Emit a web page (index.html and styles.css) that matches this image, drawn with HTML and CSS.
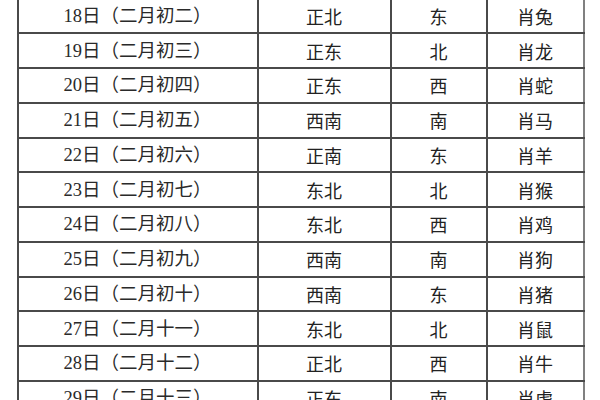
FILE: index.html
```html
<!DOCTYPE html>
<html lang="zh">
<head>
<meta charset="utf-8">
<link rel="stylesheet" href="styles.css">
</head>
<body>
<table class="tbl">
<colgroup><col class="c1"><col class="c2"><col class="c3"><col class="c4"></colgroup>
<tbody>
<tr><td class="date">18日（二月初二）</td><td>正北</td><td>东</td><td>肖兔</td></tr>
<tr><td class="date">19日（二月初三）</td><td>正东</td><td>北</td><td>肖龙</td></tr>
<tr><td class="date">20日（二月初四）</td><td>正东</td><td>西</td><td>肖蛇</td></tr>
<tr><td class="date">21日（二月初五）</td><td>西南</td><td>南</td><td>肖马</td></tr>
<tr><td class="date">22日（二月初六）</td><td>正南</td><td>东</td><td>肖羊</td></tr>
<tr><td class="date">23日（二月初七）</td><td>东北</td><td>北</td><td>肖猴</td></tr>
<tr><td class="date">24日（二月初八）</td><td>东北</td><td>西</td><td>肖鸡</td></tr>
<tr><td class="date">25日（二月初九）</td><td>西南</td><td>南</td><td>肖狗</td></tr>
<tr><td class="date">26日（二月初十）</td><td>西南</td><td>东</td><td>肖猪</td></tr>
<tr><td class="date">27日（二月十一）</td><td>东北</td><td>北</td><td>肖鼠</td></tr>
<tr><td class="date">28日（二月十二）</td><td>正北</td><td>西</td><td>肖牛</td></tr>
<tr><td class="date">29日（二月十三）</td><td>正东</td><td>南</td><td>肖虎</td></tr>
</tbody>
</table>
</body>
</html>
```
FILE: styles.css
```css
html, body {
  margin: 0;
  padding: 0;
  background: #ffffff;
  overflow: hidden;
}
.tbl {
  margin: -2.5px 0 0 16.5px;
  border-collapse: collapse;
  table-layout: fixed;
  width: 568px;
}
.c1 { width: 240px; }
.c2 { width: 133px; }
.c3 { width: 96px; }
.c4 { width: 97px; }
.tbl tr { height: 34.75px; }
.tbl td {
  border: 2px solid #4a4a4a;
  padding: 0;
  text-align: center;
  vertical-align: middle;
  font-family: "Noto Sans CJK SC", sans-serif;
  font-size: 18px;
  line-height: 20px;
  color: #222222;
}
.tbl td:last-child {
  border-right-color: #808080;
}
.tbl td.date {
  font-family: "Liberation Serif", "Noto Sans CJK SC", serif;
  font-size: 18.5px;
  color: #2a2a2a;
}
```
